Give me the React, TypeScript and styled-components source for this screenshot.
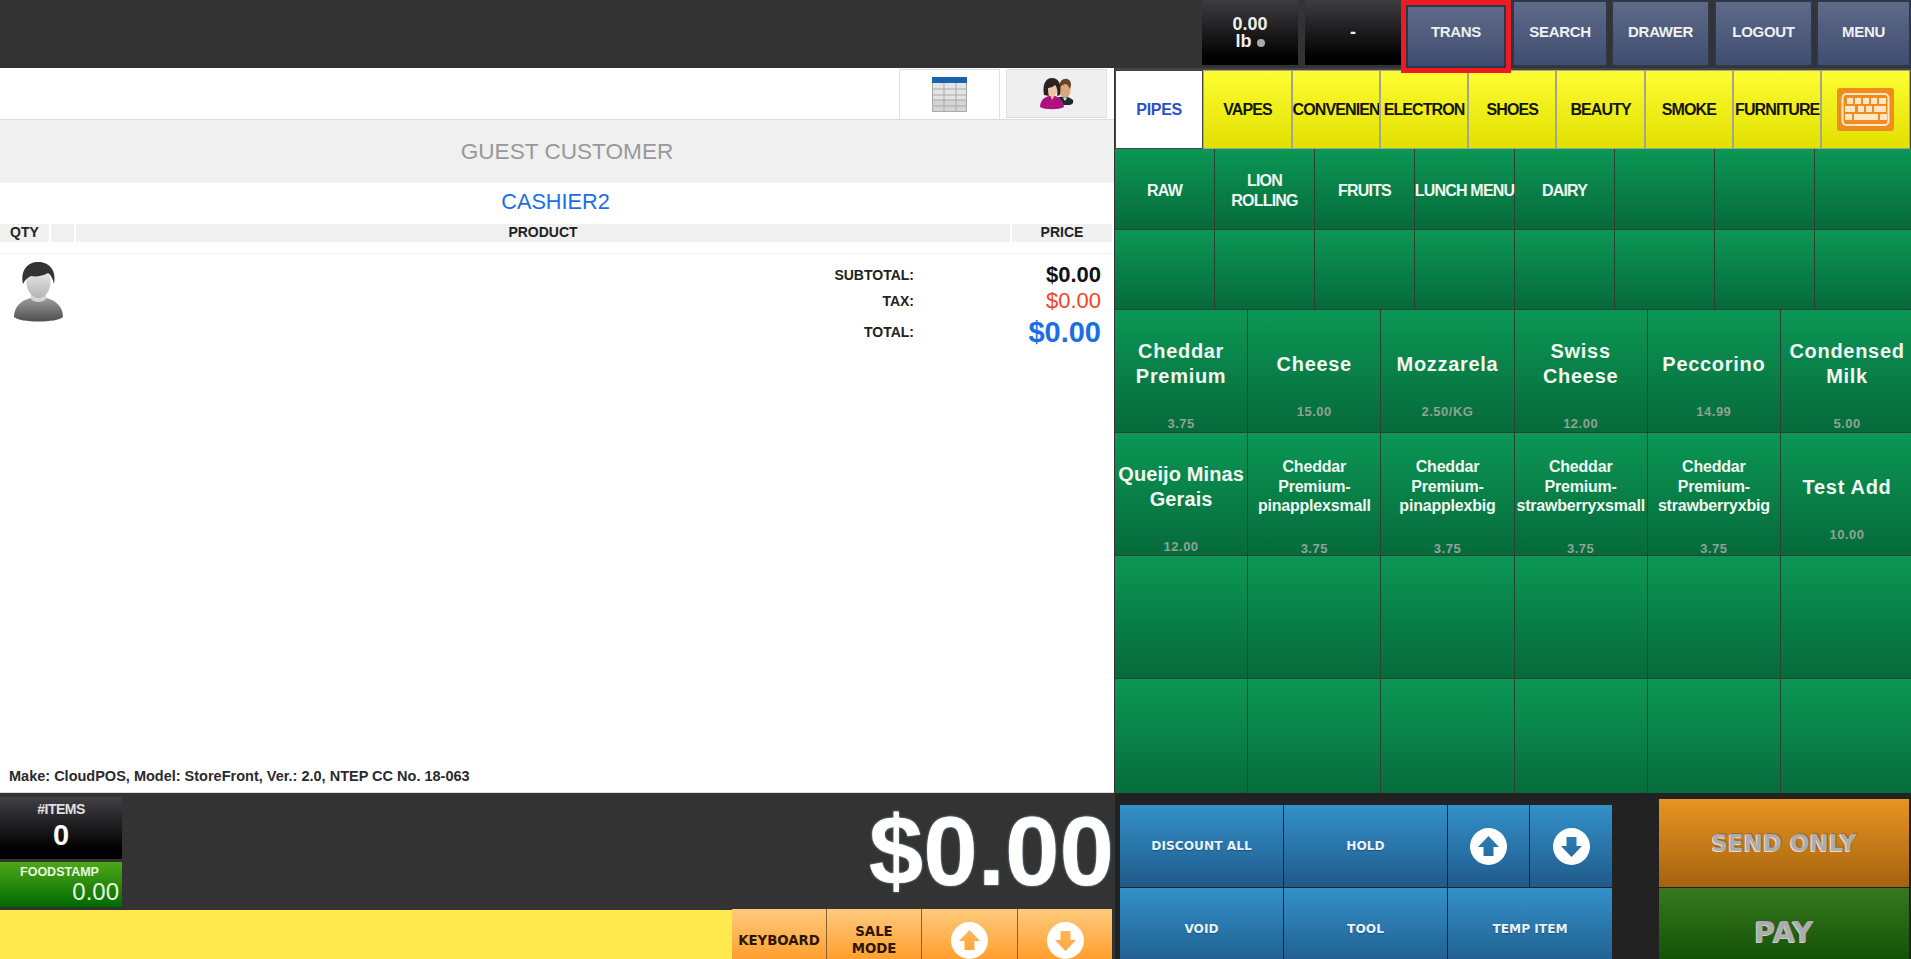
import React from 'react';
import styled, { createGlobalStyle } from 'styled-components';

const GlobalStyle = createGlobalStyle`
  html, body {
    margin: 0;
    padding: 0;
    background: #fff;
    overflow: hidden;
  }
  * {
    box-sizing: border-box;
  }
`;

const Page = styled.div`
  display: flex;
  flex-direction: column;
  width: 1911px;
  height: 959px;
  overflow: hidden;
  font-family: "Liberation Sans", Arial, sans-serif;
`;

// top bar
const TopBar = styled.div`
  display: flex;
  justify-content: flex-end;
  align-items: flex-start;
  flex: 0 0 68px;
  background: #333;
`;

const ScaleBox = styled.div<{ $ml?: number }>`
  display: flex;
  flex-direction: column;
  align-items: center;
  justify-content: center;
  width: 96px;
  height: 65px;
  margin-left: ${(p) => p.$ml ?? 0}px;
  background: linear-gradient(#3d3d40, #000 90%);
  color: #eee;
  font-size: 18px;
  font-weight: bold;
  line-height: 17px;
`;

const ScaleDot = styled.span`
  display: inline-block;
  width: 8px;
  height: 8px;
  margin-left: 5px;
  border-radius: 50%;
  background: #aaa;
`;

const TopButton = styled.div<{ $w: number; $ml: number; $active?: boolean }>`
  display: flex;
  align-items: center;
  justify-content: center;
  position: relative;
  z-index: 2;
  width: ${(p) => p.$w}px;
  height: ${(p) => (p.$active ? 63 : 67)}px;
  margin-top: ${(p) => (p.$active ? 5 : 0)}px;
  margin-left: ${(p) => p.$ml}px;
  padding-bottom: ${(p) => (p.$active ? 10 : 5)}px;
  border: 2px solid #2f3747;
  outline: ${(p) => (p.$active ? '5px solid #ed1c24' : 'none')};
  background: linear-gradient(#5e6a88, #3f4d70);
  color: #eef0f4;
  font-size: 15px;
  font-weight: bold;
  letter-spacing: -0.3px;
`;

// main area
const Main = styled.div`
  display: flex;
  flex: 1;
  min-height: 0;
`;

const LeftPanel = styled.div`
  display: flex;
  flex-direction: column;
  width: 1114px;
  background: #fff;
`;

const RightPanel = styled.div`
  display: flex;
  flex-direction: column;
  width: 797px;
  overflow: hidden;
  border-left: 1px solid #333;
  background: #222;
`;

const TabRow = styled.div`
  display: flex;
  justify-content: flex-end;
  gap: 6px;
  flex: 0 0 51px;
  padding: 1px 7px 0 0;
  border-bottom: 1px solid #ddd;
`;

const Tab = styled.div<{ $active?: boolean }>`
  display: flex;
  align-items: center;
  justify-content: center;
  width: 101px;
  height: ${(p) => (p.$active ? 50 : 49)}px;
  border: 1px solid #e2e2e2;
  border-bottom: ${(p) => (p.$active ? 'none' : '1px solid #ddd')};
  background: ${(p) => (p.$active ? '#fff' : '#efefef')};
`;

const GuestBand = styled.div`
  display: flex;
  align-items: center;
  justify-content: center;
  flex: 0 0 63px;
  padding-left: 20px;
  background: #f0f0f0;
  color: #999;
  font-size: 22.6px;
`;

const CashierRow = styled.div`
  display: flex;
  align-items: center;
  justify-content: center;
  flex: 0 0 41px;
  padding: 0 3px 3px 0;
  color: #1a6ee6;
  font-size: 21.7px;
`;

const TableHead = styled.div`
  display: flex;
  gap: 2px;
  flex: 0 0 18px;
  padding-right: 2px;
  color: #222;
  font-size: 14px;
  font-weight: bold;
  line-height: 17px;
`;

const HeadCell = styled.div<{ $w?: number; $center?: boolean }>`
  flex: ${(p) => (p.$w ? `0 0 ${p.$w}px` : '1')};
  padding-left: ${(p) => (p.$center ? 0 : 10)}px;
  background: #f0f0f0;
  text-align: ${(p) => (p.$center ? 'center' : 'left')};
`;

const Receipt = styled.div`
  display: flex;
  flex-direction: column;
  flex: 1;
  min-height: 0;
  margin-top: 11px;
  border-top: 1px solid #f3f3f3;
`;

const ReceiptTop = styled.div`
  display: flex;
  justify-content: space-between;
  flex: 1;
  padding: 8px 13px 0 14px;
`;

const Totals = styled.div`
  display: grid;
  grid-template-columns: auto 187px;
  grid-template-rows: 26px 26px 36px;
  align-items: center;
  align-self: flex-start;
`;

const TotalLabel = styled.div`
  color: #222;
  font-size: 14px;
  font-weight: bold;
  text-align: right;
`;

const TotalValue = styled.div<{ $color: string; $size: number; $bold?: boolean }>`
  color: ${(p) => p.$color};
  font-size: ${(p) => p.$size}px;
  font-weight: ${(p) => (p.$bold ? 'bold' : 'normal')};
  text-align: right;
`;

const MakeLine = styled.div`
  flex: 0 0 24px;
  padding: 0 0 8px 9px;
  color: #2a2a30;
  font-size: 14.5px;
  font-weight: bold;
  line-height: 16px;
`;

const BottomDark = styled.div`
  display: flex;
  justify-content: space-between;
  flex: 0 0 118px;
  padding-top: 4px;
  border-top: 1px solid #ddd;
  background: #333;
`;

const Counters = styled.div`
  display: flex;
  flex-direction: column;
  gap: 3px;
  width: 122px;
`;

const ItemsBox = styled.div`
  display: flex;
  flex-direction: column;
  align-items: center;
  height: 62px;
  padding-top: 4px;
  background: linear-gradient(#404046, #000 85%);
  color: #fff;
`;

const ItemsLabel = styled.div`
  color: #e0e0e0;
  font-size: 14px;
  font-weight: bold;
  letter-spacing: -0.5px;
  line-height: 16px;
`;

const ItemsCount = styled.div`
  font-size: 29px;
  font-weight: bold;
  line-height: 36px;
`;

const StampBox = styled.div`
  display: flex;
  flex-direction: column;
  height: 45px;
  padding: 3px 3px 0 0;
  background: linear-gradient(#4da817, #006a00);
  color: #eaf6e2;
`;

const StampLabel = styled.div`
  font-size: 12.5px;
  font-weight: bold;
  line-height: 14px;
  text-align: center;
`;

const StampValue = styled.div`
  font-size: 24px;
  line-height: 26px;
  text-align: right;
`;

const BigTotal = styled.div`
  align-self: center;
  margin-top: -6px;
  color: #fff;
  font-size: 98px;
  font-weight: bold;
  line-height: 110px;
  text-shadow: 0 0 2px #9fd0f5;
`;

const InputRow = styled.div`
  display: flex;
  flex: 0 0 49px;
  min-height: 0;
  background: #333;
`;

const YellowInput = styled.div`
  width: 732px;
  background: #ffe94f;
`;

const OrangeButtons = styled.div`
  display: grid;
  grid-template-columns: 94px 94px 95px 94px;
  gap: 1px;
  height: 62px;
  margin-top: -1px;
  background: #8a6030;
`;

const OrangeButton = styled.div`
  display: flex;
  align-items: center;
  justify-content: center;
  background: linear-gradient(#ffca7d, #ff9d2a 85%);
  color: #2a1605;
  font-family: "DejaVu Sans", sans-serif;
  font-size: 13.3px;
  font-weight: bold;
  line-height: 17px;
  text-align: center;
`;

// right side
const CategoryRow = styled.div`
  display: grid;
  grid-template-columns: repeat(9, 88.3px);
  flex: 0 0 81px;
  padding-top: 2px;
  background: #444;
`;

const Category = styled.div<{ $active?: boolean }>`
  display: flex;
  align-items: center;
  justify-content: safe center;
  overflow: hidden;
  border: 1.5px solid ${(p) => (p.$active ? '#444' : '#a5a58f')};
  background: ${(p) => (p.$active ? '#fff' : 'linear-gradient(#fdfd33, #e2e000)')};
  color: ${(p) => (p.$active ? '#2a4fc9' : '#151505')};
  font-size: 16px;
  font-weight: bold;
  letter-spacing: ${(p) => (p.$active ? -0.3 : -0.9)}px;
  white-space: nowrap;
`;

const SubGrid = styled.div`
  display: grid;
  grid-template-columns: repeat(8, 100px);
  grid-template-rows: 81px 80px;
  flex: 0 0 161px;
`;

const SubCell = styled.div`
  display: flex;
  align-items: center;
  justify-content: center;
  padding-top: 4px;
  border-right: 1px solid #2c4036;
  border-bottom: 1px solid #2c4036;
  background: linear-gradient(#0b9755, #066a3b);
  color: #f2f7f3;
  font-size: 16px;
  font-weight: bold;
  letter-spacing: -0.8px;
  line-height: 20px;
  text-align: center;
  white-space: nowrap;
`;

const ProductGrid = styled.div`
  display: grid;
  grid-template-columns: repeat(6, 133.2px);
  grid-auto-rows: 123px;
  flex: 0 0 483px;
  overflow: hidden;
`;

const Product = styled.div<{ $small?: boolean }>`
  display: flex;
  flex-direction: column;
  align-items: center;
  justify-content: center;
  overflow: hidden;
  padding-top: ${(p) => (p.$small ? 24 : 28)}px;
  border-right: 1px solid #2c4036;
  border-bottom: 1px solid #2c4036;
  background: linear-gradient(#0b9755, #066a3b);
  text-align: center;
`;

const ProductName = styled.div<{ $small?: boolean; $tight?: boolean }>`
  color: #f2f7f3;
  font-size: ${(p) => (p.$small ? 16 : 20)}px;
  font-weight: bold;
  letter-spacing: ${(p) => (p.$small ? -0.2 : p.$tight ? 0.1 : 0.7)}px;
  line-height: ${(p) => (p.$small ? 19.5 : 25)}px;
  white-space: nowrap;
`;

const ProductPrice = styled.div<{ $small?: boolean }>`
  margin-top: ${(p) => (p.$small ? 26 : 27)}px;
  color: #8fa396;
  font-size: 13px;
  font-weight: bold;
  letter-spacing: 0.5px;
  line-height: ${(p) => (p.$small ? 13 : 15)}px;
`;

const ActionArea = styled.div`
  display: flex;
  align-items: flex-start;
  flex: 1;
  min-height: 0;
  padding-left: 5px;
`;

const BlueGrid = styled.div`
  display: grid;
  grid-template-columns: 163px 163px 81px 82px;
  grid-template-rows: 82px 82px;
  gap: 1px;
  margin-top: 12px;
`;

const BlueButton = styled.div<{ $span?: number }>`
  display: flex;
  align-items: center;
  justify-content: center;
  grid-column: span ${(p) => p.$span ?? 1};
  background: linear-gradient(#3391c9, #1f5a8a);
  color: #e8f2fa;
  font-family: "DejaVu Sans", sans-serif;
  font-size: 12.2px;
  font-weight: bold;
  text-shadow: 0 1px 1px rgba(0, 0, 0, 0.3);
`;

const PayColumn = styled.div`
  display: flex;
  flex-direction: column;
  gap: 1px;
  width: 250px;
  margin: 6px 0 0 47px;
`;

const PayButton = styled.div<{ $from: string; $to: string; $size: number; $h: number }>`
  display: flex;
  align-items: center;
  justify-content: center;
  flex: 0 0 ${(p) => p.$h}px;
  background: linear-gradient(${(p) => p.$from}, ${(p) => p.$to});
  color: #adadb1;
  font-family: "DejaVu Sans", sans-serif;
  font-size: ${(p) => p.$size}px;
  font-weight: bold;
  text-shadow: -1px 1px 0 rgba(255, 255, 255, 0.75), 1px -1px 0 rgba(70, 70, 70, 0.4);
`;

const ArrowIcon = ({ down }: { down?: boolean }) => (
  <svg width="37" height="37" viewBox="0 0 37 37" style={{ transform: down ? 'rotate(180deg)' : undefined }}>
    <path
      fill="#fff"
      fillRule="evenodd"
      d="M18.5 0a18.5 18.5 0 1 0 0 37a18.5 18.5 0 1 0 0-37zM18.5 8L29 19h-5.5v9h-10v-9H8z"
    />
  </svg>
);

const KeyboardIcon = () => {
  const rows = [
    [[10, 10, 6], [18, 10, 6], [26, 10, 6], [34, 10, 6], [42, 10, 7]],
    [[8, 18, 10], [21, 18, 6], [29, 18, 6], [37, 18, 12]],
    [[8, 26, 7], [17, 26, 24], [43, 26, 7]],
  ];
  return (
    <svg width="57" height="43" viewBox="0 0 57 43">
      <rect width="57" height="43" rx="3" fill="#ee8c1e" />
      <rect x="5.5" y="6" width="46" height="31" rx="4" fill="none" stroke="#ffe6c4" strokeWidth="2" />
      {rows.flat().map(([x, y, w]) => (
        <rect key={`${x}-${y}`} x={x} y={y} width={w} height="6" fill="#ffe6c4" />
      ))}
    </svg>
  );
};

const TableIcon = () => (
  <svg width="35" height="35" viewBox="0 0 35 35">
    <rect width="35" height="35" fill="#e4e4e4" />
    <rect width="35" height="6" fill="#1763ae" />
    <rect y="23" width="35" height="12" fill="#d4d4d4" />
    <path
      d="M0.5 6V34.5H34.5V6M12 6V35M24 6V35M0 12H35M0 18H35M0 23H35M0 29H35"
      fill="none"
      stroke="#a9a9a9"
      strokeWidth="1"
    />
  </svg>
);

const PeopleIcon = () => (
  <svg width="34" height="32" viewBox="0 0 34 32">
    <path d="M16 21c2-3 12-4 17 1 1 3-1 5-5 5H18z" fill="#1e2a30" />
    <path d="M23 20l2 3 2-3z" fill="#cfe0ea" />
    <ellipse cx="25" cy="12" rx="5.5" ry="8" fill="#d9a57f" />
    <path d="M19 11C18 3 24 0 27 1c4 1 5 5 3 10-1-3-3-5-5-5-2 1-5 2-6 5z" fill="#6b4226" />
    <path d="M0 29c0-7 5-10 9-11h6c4 1 8 4 9 11-5 3-19 3-24 0z" fill="#b0107f" />
    <path d="M10 17l2 5 3-5z" fill="#e8b99b" />
    <ellipse cx="12" cy="11" rx="5.5" ry="7.5" fill="#ecc4a6" />
    <path d="M4 17C2 6 6 0 12 0s10 5 8 17l-3 1c1-5 0-9-2-11-2 2-5 3-7 3 0 3 0 5 1 8z" fill="#2b2320" />
  </svg>
);

const AvatarIcon = () => (
  <svg width="49" height="60" viewBox="0 0 49 60">
    <defs>
      <linearGradient id="body" x1="0" y1="0" x2="0" y2="1">
        <stop offset="0" stopColor="#9a9a9a" />
        <stop offset="1" stopColor="#4f4f4f" />
      </linearGradient>
      <linearGradient id="face" x1="0" y1="0" x2="0" y2="1">
        <stop offset="0" stopColor="#f2f2f2" />
        <stop offset="1" stopColor="#b5b5b5" />
      </linearGradient>
    </defs>
    <path d="M0 55c0-11 8-17 17-19h15c9 2 17 8 17 19-6 6-43 6-49 0z" fill="url(#body)" />
    <path d="M17 29h15v8c-3 4-12 4-15 0z" fill="#d5d5d5" />
    <ellipse cx="24.5" cy="20" rx="12" ry="16" fill="url(#face)" />
    <path d="M9 22C6 8 14 0 24 0s19 7 16 22c-1-5-3-9-6-11-5 3-12 4-17 3-4 2-6 4-8 8z" fill="#333" />
  </svg>
);

const topButtons = [
  { label: 'SEARCH', w: 96, ml: 6 },
  { label: 'DRAWER', w: 99, ml: 3 },
  { label: 'LOGOUT', w: 99, ml: 4 },
  { label: 'MENU', w: 95, ml: 3 },
];

const categories = ['VAPES', 'CONVENIEN', 'ELECTRON', 'SHOES', 'BEAUTY', 'SMOKE', 'FURNITURE'];

const subCategories = ['RAW', 'LION\nROLLING', 'FRUITS', 'LUNCH MENU', 'DAIRY', '', '', ''];

const products = [
  { name: 'Cheddar\nPremium', price: '3.75' },
  { name: 'Cheese', price: '15.00' },
  { name: 'Mozzarela', price: '2.50/KG' },
  { name: 'Swiss\nCheese', price: '12.00' },
  { name: 'Peccorino', price: '14.99' },
  { name: 'Condensed\nMilk', price: '5.00' },
  { name: 'Queijo Minas\nGerais', price: '12.00', tight: true },
  { name: 'Cheddar\nPremium-\npinapplexsmall', price: '3.75', small: true },
  { name: 'Cheddar\nPremium-\npinapplexbig', price: '3.75', small: true },
  { name: 'Cheddar\nPremium-\nstrawberryxsmall', price: '3.75', small: true },
  { name: 'Cheddar\nPremium-\nstrawberryxbig', price: '3.75', small: true },
  { name: 'Test Add', price: '10.00' },
];

const Lines = ({ text }: { text: string }) => (
  <>
    {text.split('\n').map((line) => (
      <div key={line}>{line}</div>
    ))}
  </>
);

const App = () => {
  const emptyCells = Array.from({ length: 12 }, (_, i) => i);

  return (
    <Page>
      <GlobalStyle />
      <TopBar>
        <ScaleBox>
          <div>0.00</div>
          <div>
            lb
            <ScaleDot />
          </div>
        </ScaleBox>
        <ScaleBox $ml={7}>-</ScaleBox>
        <TopButton $w={100} $ml={5} $active>
          TRANS
        </TopButton>
        {topButtons.map((b) => (
          <TopButton key={b.label} $w={b.w} $ml={b.ml}>
            {b.label}
          </TopButton>
        ))}
      </TopBar>

      <Main>
        <LeftPanel>
          <TabRow>
            <Tab $active>
              <TableIcon />
            </Tab>
            <Tab>
              <PeopleIcon />
            </Tab>
          </TabRow>
          <GuestBand>GUEST CUSTOMER</GuestBand>
          <CashierRow>CASHIER2</CashierRow>
          <TableHead>
            <HeadCell $w={49}>QTY</HeadCell>
            <HeadCell $w={23} />
            <HeadCell $center>PRODUCT</HeadCell>
            <HeadCell $w={100} $center>
              PRICE
            </HeadCell>
          </TableHead>
          <Receipt>
            <ReceiptTop>
              <AvatarIcon />
              <Totals>
                <TotalLabel>SUBTOTAL:</TotalLabel>
                <TotalValue $color="#111" $size={22} $bold>
                  $0.00
                </TotalValue>
                <TotalLabel>TAX:</TotalLabel>
                <TotalValue $color="#f4431f" $size={22}>
                  $0.00
                </TotalValue>
                <TotalLabel>TOTAL:</TotalLabel>
                <TotalValue $color="#1a6ee6" $size={29} $bold>
                  $0.00
                </TotalValue>
              </Totals>
            </ReceiptTop>
            <MakeLine>Make: CloudPOS, Model: StoreFront, Ver.: 2.0, NTEP CC No. 18-063</MakeLine>
          </Receipt>
          <BottomDark>
            <Counters>
              <ItemsBox>
                <ItemsLabel>#ITEMS</ItemsLabel>
                <ItemsCount>0</ItemsCount>
              </ItemsBox>
              <StampBox>
                <StampLabel>FOODSTAMP</StampLabel>
                <StampValue>0.00</StampValue>
              </StampBox>
            </Counters>
            <BigTotal>$0.00</BigTotal>
          </BottomDark>
          <InputRow>
            <YellowInput />
            <OrangeButtons>
              <OrangeButton>KEYBOARD</OrangeButton>
              <OrangeButton>
                SALE
                <br />
                MODE
              </OrangeButton>
              <OrangeButton>
                <ArrowIcon />
              </OrangeButton>
              <OrangeButton>
                <ArrowIcon down />
              </OrangeButton>
            </OrangeButtons>
          </InputRow>
        </LeftPanel>

        <RightPanel>
          <CategoryRow>
            <Category $active>PIPES</Category>
            {categories.map((c) => (
              <Category key={c}>{c}</Category>
            ))}
            <Category>
              <KeyboardIcon />
            </Category>
          </CategoryRow>
          <SubGrid>
            {subCategories.map((s, i) => (
              <SubCell key={`top-${i}`}>
                <div>
                  <Lines text={s} />
                </div>
              </SubCell>
            ))}
            {subCategories.map((_, i) => (
              <SubCell key={`bottom-${i}`} />
            ))}
          </SubGrid>
          <ProductGrid>
            {products.map((p, i) => (
              <Product key={`${p.name}-${i}`} $small={p.small}>
                <ProductName $small={p.small} $tight={p.tight}>
                  <Lines text={p.name} />
                </ProductName>
                <ProductPrice $small={p.small}>{p.price}</ProductPrice>
              </Product>
            ))}
            {emptyCells.map((i) => (
              <Product key={i} />
            ))}
          </ProductGrid>
          <ActionArea>
            <BlueGrid>
              <BlueButton>DISCOUNT ALL</BlueButton>
              <BlueButton>HOLD</BlueButton>
              <BlueButton>
                <ArrowIcon />
              </BlueButton>
              <BlueButton>
                <ArrowIcon down />
              </BlueButton>
              <BlueButton>VOID</BlueButton>
              <BlueButton>TOOL</BlueButton>
              <BlueButton $span={2}>TEMP ITEM</BlueButton>
            </BlueGrid>
            <PayColumn>
              <PayButton $from="#e99421" $to="#a4630f" $size={23} $h={88}>
                SEND ONLY
              </PayButton>
              <PayButton $from="#38781e" $to="#0b4a00" $size={29} $h={88}>
                PAY
              </PayButton>
            </PayColumn>
          </ActionArea>
        </RightPanel>
      </Main>
    </Page>
  );
};

export default App;
